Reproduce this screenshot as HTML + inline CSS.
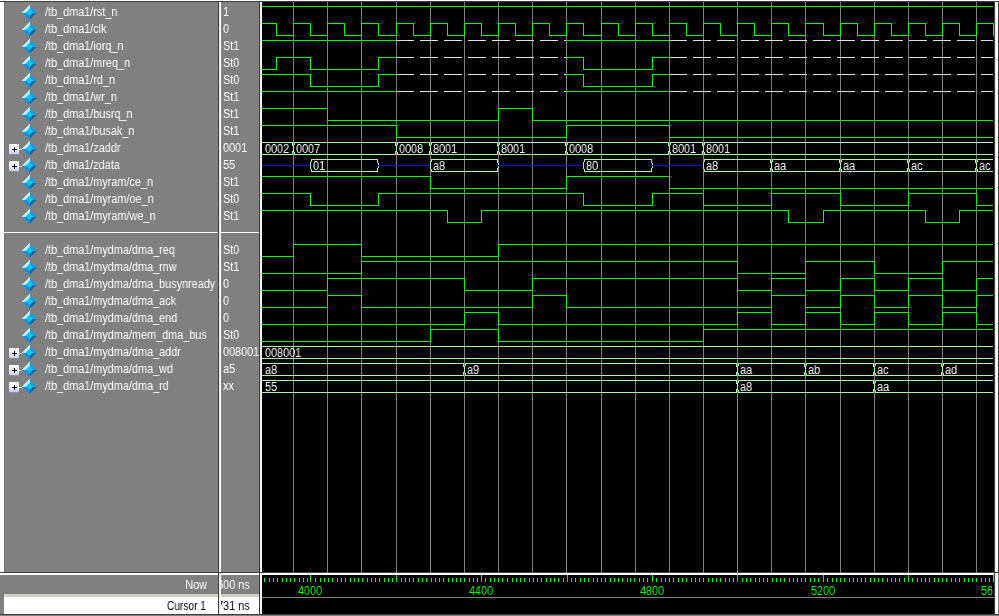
<!DOCTYPE html>
<html><head><meta charset="utf-8"><style>
html,body{margin:0;padding:0;width:999px;height:616px;overflow:hidden;background:#808080;}
body{position:relative;font-family:"Liberation Sans",sans-serif;font-size:12px;}
.t{transform:scaleX(0.905);transform-origin:0 0;will-change:transform;}
.tr{transform:scaleX(0.905);transform-origin:100% 0;will-change:transform;}
.a{position:absolute;}
.nm{position:absolute;left:45px;transform:scaleX(0.905);transform-origin:0 0;will-change:transform;color:#fff;white-space:nowrap;line-height:17px;height:17px;}
.vl{position:absolute;left:223px;transform:scaleX(0.905);transform-origin:0 0;will-change:transform;color:#fff;white-space:nowrap;line-height:17px;height:17px;}
.dia{position:absolute;left:22px;width:15px;height:15px;}
.plus{position:absolute;left:9px;width:10px;height:10px;}
</style></head><body>

<div class="a" style="left:0px;top:0px;width:999px;height:1px;background:#ffffff;"></div>
<div class="a" style="left:0px;top:1px;width:999px;height:1px;background:#404040;"></div>
<div class="a" style="left:0px;top:2px;width:4px;height:570px;background:#ffffff;"></div>
<div class="a" style="left:4px;top:2px;width:1px;height:570px;background:#747474;"></div>
<div class="a" style="left:4px;top:232px;width:214px;height:1px;background:#ffffff;"></div>
<div class="a" style="left:221px;top:232px;width:38px;height:1px;background:#ffffff;"></div>
<div class="a" style="left:218px;top:2px;width:1px;height:614px;background:#404040;"></div>
<div class="a" style="left:219px;top:2px;width:1px;height:614px;background:#ece9e0;"></div>
<div class="a" style="left:220px;top:2px;width:1px;height:614px;background:#ffffff;"></div>
<div class="a" style="left:259px;top:2px;width:1px;height:614px;background:#404040;"></div>
<div class="a" style="left:260px;top:2px;width:1px;height:614px;background:#ece9e0;"></div>
<div class="a" style="left:261px;top:2px;width:1px;height:614px;background:#ffffff;"></div>
<div class="a" style="left:262px;top:2px;width:732px;height:570px;background:#000000;"></div>
<div class="a" style="left:994px;top:2px;width:1px;height:614px;background:#404040;"></div>
<div class="a" style="left:995px;top:2px;width:1px;height:614px;background:#ece9e0;"></div>
<div class="a" style="left:996px;top:2px;width:2px;height:614px;background:#ffffff;"></div>
<div class="a" style="left:998px;top:2px;width:1px;height:570px;background:#404040;"></div>
<div class="a" style="left:998px;top:575px;width:1px;height:41px;background:#808080;"></div>
<div class="a" style="left:0px;top:572px;width:999px;height:1px;background:#404040;"></div>
<div class="a" style="left:0px;top:573px;width:218px;height:2px;background:#ffffff;"></div>
<div class="a" style="left:221px;top:573px;width:38px;height:2px;background:#ffffff;"></div>
<div class="a" style="left:262px;top:573px;width:732px;height:2px;background:#ffffff;"></div>
<div class="a" style="left:262px;top:575px;width:732px;height:22px;background:#000000;"></div>
<div class="a" style="left:262px;top:597px;width:732px;height:1px;background:#808080;"></div>
<div class="a" style="left:262px;top:598px;width:732px;height:16px;background:#000000;"></div>
<div class="a" style="left:4px;top:594px;width:214px;height:3px;background:#d4d0c8;"></div>
<div class="a" style="left:4px;top:597px;width:214px;height:17px;background:#ffffff;"></div>
<div class="a" style="left:221px;top:594px;width:38px;height:3px;background:#d4d0c8;"></div>
<div class="a" style="left:221px;top:597px;width:38px;height:17px;background:#ffffff;"></div>
<div class="a" style="left:0px;top:614px;width:999px;height:1px;background:#404040;"></div>
<div class="a" style="left:0px;top:615px;width:999px;height:1px;background:#808080;"></div>
<svg class="a" style="left:0;top:0" width="999" height="616" shape-rendering="crispEdges">
<rect x="293" y="2" width="1" height="571" fill="#808080"/>
<rect x="327" y="2" width="1" height="571" fill="#808080"/>
<rect x="361" y="2" width="1" height="571" fill="#808080"/>
<rect x="396" y="2" width="1" height="571" fill="#808080"/>
<rect x="430" y="2" width="1" height="571" fill="#808080"/>
<rect x="464" y="2" width="1" height="571" fill="#808080"/>
<rect x="498" y="2" width="1" height="571" fill="#808080"/>
<rect x="532" y="2" width="1" height="571" fill="#808080"/>
<rect x="566" y="2" width="1" height="571" fill="#808080"/>
<rect x="601" y="2" width="1" height="571" fill="#808080"/>
<rect x="635" y="2" width="1" height="571" fill="#808080"/>
<rect x="669" y="2" width="1" height="571" fill="#808080"/>
<rect x="703" y="2" width="1" height="571" fill="#808080"/>
<rect x="737" y="2" width="1" height="571" fill="#808080"/>
<rect x="771" y="2" width="1" height="571" fill="#808080"/>
<rect x="805" y="2" width="1" height="571" fill="#808080"/>
<rect x="840" y="2" width="1" height="571" fill="#808080"/>
<rect x="874" y="2" width="1" height="571" fill="#808080"/>
<rect x="908" y="2" width="1" height="571" fill="#808080"/>
<rect x="942" y="2" width="1" height="571" fill="#808080"/>
<rect x="976" y="2" width="1" height="571" fill="#808080"/>
<rect x="262" y="6" width="731" height="1" fill="#00ff00"/>
<rect x="276" y="23" width="1" height="13" fill="#00ff00"/>
<rect x="293" y="23" width="1" height="13" fill="#00ff00"/>
<rect x="310" y="23" width="1" height="13" fill="#00ff00"/>
<rect x="327" y="23" width="1" height="13" fill="#00ff00"/>
<rect x="344" y="23" width="1" height="13" fill="#00ff00"/>
<rect x="361" y="23" width="1" height="13" fill="#00ff00"/>
<rect x="378" y="23" width="1" height="13" fill="#00ff00"/>
<rect x="396" y="23" width="1" height="13" fill="#00ff00"/>
<rect x="413" y="23" width="1" height="13" fill="#00ff00"/>
<rect x="430" y="23" width="1" height="13" fill="#00ff00"/>
<rect x="447" y="23" width="1" height="13" fill="#00ff00"/>
<rect x="464" y="23" width="1" height="13" fill="#00ff00"/>
<rect x="481" y="23" width="1" height="13" fill="#00ff00"/>
<rect x="498" y="23" width="1" height="13" fill="#00ff00"/>
<rect x="515" y="23" width="1" height="13" fill="#00ff00"/>
<rect x="532" y="23" width="1" height="13" fill="#00ff00"/>
<rect x="549" y="23" width="1" height="13" fill="#00ff00"/>
<rect x="566" y="23" width="1" height="13" fill="#00ff00"/>
<rect x="583" y="23" width="1" height="13" fill="#00ff00"/>
<rect x="601" y="23" width="1" height="13" fill="#00ff00"/>
<rect x="618" y="23" width="1" height="13" fill="#00ff00"/>
<rect x="635" y="23" width="1" height="13" fill="#00ff00"/>
<rect x="652" y="23" width="1" height="13" fill="#00ff00"/>
<rect x="669" y="23" width="1" height="13" fill="#00ff00"/>
<rect x="686" y="23" width="1" height="13" fill="#00ff00"/>
<rect x="703" y="23" width="1" height="13" fill="#00ff00"/>
<rect x="720" y="23" width="1" height="13" fill="#00ff00"/>
<rect x="737" y="23" width="1" height="13" fill="#00ff00"/>
<rect x="754" y="23" width="1" height="13" fill="#00ff00"/>
<rect x="771" y="23" width="1" height="13" fill="#00ff00"/>
<rect x="788" y="23" width="1" height="13" fill="#00ff00"/>
<rect x="805" y="23" width="1" height="13" fill="#00ff00"/>
<rect x="823" y="23" width="1" height="13" fill="#00ff00"/>
<rect x="840" y="23" width="1" height="13" fill="#00ff00"/>
<rect x="857" y="23" width="1" height="13" fill="#00ff00"/>
<rect x="874" y="23" width="1" height="13" fill="#00ff00"/>
<rect x="891" y="23" width="1" height="13" fill="#00ff00"/>
<rect x="908" y="23" width="1" height="13" fill="#00ff00"/>
<rect x="925" y="23" width="1" height="13" fill="#00ff00"/>
<rect x="942" y="23" width="1" height="13" fill="#00ff00"/>
<rect x="959" y="23" width="1" height="13" fill="#00ff00"/>
<rect x="976" y="23" width="1" height="13" fill="#00ff00"/>
<rect x="993" y="23" width="1" height="13" fill="#00ff00"/>
<rect x="262" y="23" width="15" height="1" fill="#00ff00"/>
<rect x="276" y="35" width="18" height="1" fill="#00ff00"/>
<rect x="293" y="23" width="18" height="1" fill="#00ff00"/>
<rect x="310" y="35" width="18" height="1" fill="#00ff00"/>
<rect x="327" y="23" width="18" height="1" fill="#00ff00"/>
<rect x="344" y="35" width="18" height="1" fill="#00ff00"/>
<rect x="361" y="23" width="18" height="1" fill="#00ff00"/>
<rect x="378" y="35" width="19" height="1" fill="#00ff00"/>
<rect x="396" y="23" width="18" height="1" fill="#00ff00"/>
<rect x="413" y="35" width="18" height="1" fill="#00ff00"/>
<rect x="430" y="23" width="18" height="1" fill="#00ff00"/>
<rect x="447" y="35" width="18" height="1" fill="#00ff00"/>
<rect x="464" y="23" width="18" height="1" fill="#00ff00"/>
<rect x="481" y="35" width="18" height="1" fill="#00ff00"/>
<rect x="498" y="23" width="18" height="1" fill="#00ff00"/>
<rect x="515" y="35" width="18" height="1" fill="#00ff00"/>
<rect x="532" y="23" width="18" height="1" fill="#00ff00"/>
<rect x="549" y="35" width="18" height="1" fill="#00ff00"/>
<rect x="566" y="23" width="18" height="1" fill="#00ff00"/>
<rect x="583" y="35" width="19" height="1" fill="#00ff00"/>
<rect x="601" y="23" width="18" height="1" fill="#00ff00"/>
<rect x="618" y="35" width="18" height="1" fill="#00ff00"/>
<rect x="635" y="23" width="18" height="1" fill="#00ff00"/>
<rect x="652" y="35" width="18" height="1" fill="#00ff00"/>
<rect x="669" y="23" width="18" height="1" fill="#00ff00"/>
<rect x="686" y="35" width="18" height="1" fill="#00ff00"/>
<rect x="703" y="23" width="18" height="1" fill="#00ff00"/>
<rect x="720" y="35" width="18" height="1" fill="#00ff00"/>
<rect x="737" y="23" width="18" height="1" fill="#00ff00"/>
<rect x="754" y="35" width="18" height="1" fill="#00ff00"/>
<rect x="771" y="23" width="18" height="1" fill="#00ff00"/>
<rect x="788" y="35" width="18" height="1" fill="#00ff00"/>
<rect x="805" y="23" width="19" height="1" fill="#00ff00"/>
<rect x="823" y="35" width="18" height="1" fill="#00ff00"/>
<rect x="840" y="23" width="18" height="1" fill="#00ff00"/>
<rect x="857" y="35" width="18" height="1" fill="#00ff00"/>
<rect x="874" y="23" width="18" height="1" fill="#00ff00"/>
<rect x="891" y="35" width="18" height="1" fill="#00ff00"/>
<rect x="908" y="23" width="18" height="1" fill="#00ff00"/>
<rect x="925" y="35" width="18" height="1" fill="#00ff00"/>
<rect x="942" y="23" width="18" height="1" fill="#00ff00"/>
<rect x="959" y="35" width="18" height="1" fill="#00ff00"/>
<rect x="976" y="23" width="17" height="1" fill="#00ff00"/>
<rect x="262" y="40" width="135" height="1" fill="#00ff00"/>
<rect x="396" y="40" width="18" height="1" fill="#e0e0e0"/>
<rect x="420" y="40" width="18" height="1" fill="#e0e0e0"/>
<rect x="444" y="40" width="18" height="1" fill="#e0e0e0"/>
<rect x="468" y="40" width="18" height="1" fill="#e0e0e0"/>
<rect x="492" y="40" width="18" height="1" fill="#e0e0e0"/>
<rect x="516" y="40" width="18" height="1" fill="#e0e0e0"/>
<rect x="540" y="40" width="18" height="1" fill="#e0e0e0"/>
<rect x="564" y="40" width="2" height="1" fill="#e0e0e0"/>
<rect x="566" y="40" width="104" height="1" fill="#00ff00"/>
<rect x="669" y="40" width="18" height="1" fill="#e0e0e0"/>
<rect x="693" y="40" width="18" height="1" fill="#e0e0e0"/>
<rect x="717" y="40" width="18" height="1" fill="#e0e0e0"/>
<rect x="741" y="40" width="18" height="1" fill="#e0e0e0"/>
<rect x="765" y="40" width="18" height="1" fill="#e0e0e0"/>
<rect x="789" y="40" width="18" height="1" fill="#e0e0e0"/>
<rect x="813" y="40" width="18" height="1" fill="#e0e0e0"/>
<rect x="837" y="40" width="18" height="1" fill="#e0e0e0"/>
<rect x="861" y="40" width="18" height="1" fill="#e0e0e0"/>
<rect x="885" y="40" width="18" height="1" fill="#e0e0e0"/>
<rect x="909" y="40" width="18" height="1" fill="#e0e0e0"/>
<rect x="933" y="40" width="18" height="1" fill="#e0e0e0"/>
<rect x="957" y="40" width="18" height="1" fill="#e0e0e0"/>
<rect x="981" y="40" width="12" height="1" fill="#e0e0e0"/>
<rect x="276" y="57" width="1" height="13" fill="#00ff00"/>
<rect x="310" y="57" width="1" height="13" fill="#00ff00"/>
<rect x="378" y="57" width="1" height="13" fill="#00ff00"/>
<rect x="583" y="57" width="1" height="13" fill="#00ff00"/>
<rect x="652" y="57" width="1" height="13" fill="#00ff00"/>
<rect x="262" y="69" width="15" height="1" fill="#00ff00"/>
<rect x="276" y="57" width="35" height="1" fill="#00ff00"/>
<rect x="310" y="69" width="69" height="1" fill="#00ff00"/>
<rect x="378" y="57" width="19" height="1" fill="#00ff00"/>
<rect x="396" y="57" width="18" height="1" fill="#e0e0e0"/>
<rect x="420" y="57" width="18" height="1" fill="#e0e0e0"/>
<rect x="444" y="57" width="18" height="1" fill="#e0e0e0"/>
<rect x="468" y="57" width="18" height="1" fill="#e0e0e0"/>
<rect x="492" y="57" width="18" height="1" fill="#e0e0e0"/>
<rect x="516" y="57" width="18" height="1" fill="#e0e0e0"/>
<rect x="540" y="57" width="18" height="1" fill="#e0e0e0"/>
<rect x="564" y="57" width="2" height="1" fill="#e0e0e0"/>
<rect x="566" y="57" width="18" height="1" fill="#00ff00"/>
<rect x="583" y="69" width="70" height="1" fill="#00ff00"/>
<rect x="652" y="57" width="18" height="1" fill="#00ff00"/>
<rect x="669" y="57" width="18" height="1" fill="#e0e0e0"/>
<rect x="693" y="57" width="18" height="1" fill="#e0e0e0"/>
<rect x="717" y="57" width="18" height="1" fill="#e0e0e0"/>
<rect x="741" y="57" width="18" height="1" fill="#e0e0e0"/>
<rect x="765" y="57" width="18" height="1" fill="#e0e0e0"/>
<rect x="789" y="57" width="18" height="1" fill="#e0e0e0"/>
<rect x="813" y="57" width="18" height="1" fill="#e0e0e0"/>
<rect x="837" y="57" width="18" height="1" fill="#e0e0e0"/>
<rect x="861" y="57" width="18" height="1" fill="#e0e0e0"/>
<rect x="885" y="57" width="18" height="1" fill="#e0e0e0"/>
<rect x="909" y="57" width="18" height="1" fill="#e0e0e0"/>
<rect x="933" y="57" width="18" height="1" fill="#e0e0e0"/>
<rect x="957" y="57" width="18" height="1" fill="#e0e0e0"/>
<rect x="981" y="57" width="12" height="1" fill="#e0e0e0"/>
<rect x="310" y="74" width="1" height="13" fill="#00ff00"/>
<rect x="378" y="74" width="1" height="13" fill="#00ff00"/>
<rect x="583" y="74" width="1" height="13" fill="#00ff00"/>
<rect x="652" y="74" width="1" height="13" fill="#00ff00"/>
<rect x="262" y="74" width="49" height="1" fill="#00ff00"/>
<rect x="310" y="86" width="69" height="1" fill="#00ff00"/>
<rect x="378" y="74" width="19" height="1" fill="#00ff00"/>
<rect x="396" y="74" width="18" height="1" fill="#e0e0e0"/>
<rect x="420" y="74" width="18" height="1" fill="#e0e0e0"/>
<rect x="444" y="74" width="18" height="1" fill="#e0e0e0"/>
<rect x="468" y="74" width="18" height="1" fill="#e0e0e0"/>
<rect x="492" y="74" width="18" height="1" fill="#e0e0e0"/>
<rect x="516" y="74" width="18" height="1" fill="#e0e0e0"/>
<rect x="540" y="74" width="18" height="1" fill="#e0e0e0"/>
<rect x="564" y="74" width="2" height="1" fill="#e0e0e0"/>
<rect x="566" y="74" width="18" height="1" fill="#00ff00"/>
<rect x="583" y="86" width="70" height="1" fill="#00ff00"/>
<rect x="652" y="74" width="18" height="1" fill="#00ff00"/>
<rect x="669" y="74" width="18" height="1" fill="#e0e0e0"/>
<rect x="693" y="74" width="18" height="1" fill="#e0e0e0"/>
<rect x="717" y="74" width="18" height="1" fill="#e0e0e0"/>
<rect x="741" y="74" width="18" height="1" fill="#e0e0e0"/>
<rect x="765" y="74" width="18" height="1" fill="#e0e0e0"/>
<rect x="789" y="74" width="18" height="1" fill="#e0e0e0"/>
<rect x="813" y="74" width="18" height="1" fill="#e0e0e0"/>
<rect x="837" y="74" width="18" height="1" fill="#e0e0e0"/>
<rect x="861" y="74" width="18" height="1" fill="#e0e0e0"/>
<rect x="885" y="74" width="18" height="1" fill="#e0e0e0"/>
<rect x="909" y="74" width="18" height="1" fill="#e0e0e0"/>
<rect x="933" y="74" width="18" height="1" fill="#e0e0e0"/>
<rect x="957" y="74" width="18" height="1" fill="#e0e0e0"/>
<rect x="981" y="74" width="12" height="1" fill="#e0e0e0"/>
<rect x="262" y="91" width="135" height="1" fill="#00ff00"/>
<rect x="396" y="91" width="18" height="1" fill="#e0e0e0"/>
<rect x="420" y="91" width="18" height="1" fill="#e0e0e0"/>
<rect x="444" y="91" width="18" height="1" fill="#e0e0e0"/>
<rect x="468" y="91" width="18" height="1" fill="#e0e0e0"/>
<rect x="492" y="91" width="18" height="1" fill="#e0e0e0"/>
<rect x="516" y="91" width="18" height="1" fill="#e0e0e0"/>
<rect x="540" y="91" width="18" height="1" fill="#e0e0e0"/>
<rect x="564" y="91" width="2" height="1" fill="#e0e0e0"/>
<rect x="566" y="91" width="104" height="1" fill="#00ff00"/>
<rect x="669" y="91" width="18" height="1" fill="#e0e0e0"/>
<rect x="693" y="91" width="18" height="1" fill="#e0e0e0"/>
<rect x="717" y="91" width="18" height="1" fill="#e0e0e0"/>
<rect x="741" y="91" width="18" height="1" fill="#e0e0e0"/>
<rect x="765" y="91" width="18" height="1" fill="#e0e0e0"/>
<rect x="789" y="91" width="18" height="1" fill="#e0e0e0"/>
<rect x="813" y="91" width="18" height="1" fill="#e0e0e0"/>
<rect x="837" y="91" width="18" height="1" fill="#e0e0e0"/>
<rect x="861" y="91" width="18" height="1" fill="#e0e0e0"/>
<rect x="885" y="91" width="18" height="1" fill="#e0e0e0"/>
<rect x="909" y="91" width="18" height="1" fill="#e0e0e0"/>
<rect x="933" y="91" width="18" height="1" fill="#e0e0e0"/>
<rect x="957" y="91" width="18" height="1" fill="#e0e0e0"/>
<rect x="981" y="91" width="12" height="1" fill="#e0e0e0"/>
<rect x="327" y="108" width="1" height="13" fill="#00ff00"/>
<rect x="498" y="108" width="1" height="13" fill="#00ff00"/>
<rect x="532" y="108" width="1" height="13" fill="#00ff00"/>
<rect x="262" y="108" width="66" height="1" fill="#00ff00"/>
<rect x="327" y="120" width="172" height="1" fill="#00ff00"/>
<rect x="498" y="108" width="35" height="1" fill="#00ff00"/>
<rect x="532" y="120" width="461" height="1" fill="#00ff00"/>
<rect x="396" y="125" width="1" height="13" fill="#00ff00"/>
<rect x="566" y="125" width="1" height="13" fill="#00ff00"/>
<rect x="669" y="125" width="1" height="13" fill="#00ff00"/>
<rect x="262" y="125" width="135" height="1" fill="#00ff00"/>
<rect x="396" y="137" width="171" height="1" fill="#00ff00"/>
<rect x="566" y="125" width="104" height="1" fill="#00ff00"/>
<rect x="669" y="137" width="324" height="1" fill="#00ff00"/>
<rect x="430" y="176" width="1" height="13" fill="#00ff00"/>
<rect x="566" y="176" width="1" height="13" fill="#00ff00"/>
<rect x="669" y="176" width="1" height="13" fill="#00ff00"/>
<rect x="262" y="176" width="169" height="1" fill="#00ff00"/>
<rect x="430" y="188" width="137" height="1" fill="#00ff00"/>
<rect x="566" y="176" width="104" height="1" fill="#00ff00"/>
<rect x="669" y="188" width="324" height="1" fill="#00ff00"/>
<rect x="310" y="193" width="1" height="13" fill="#00ff00"/>
<rect x="378" y="193" width="1" height="13" fill="#00ff00"/>
<rect x="583" y="193" width="1" height="13" fill="#00ff00"/>
<rect x="652" y="193" width="1" height="13" fill="#00ff00"/>
<rect x="703" y="193" width="1" height="13" fill="#00ff00"/>
<rect x="771" y="193" width="1" height="13" fill="#00ff00"/>
<rect x="840" y="193" width="1" height="13" fill="#00ff00"/>
<rect x="908" y="193" width="1" height="13" fill="#00ff00"/>
<rect x="976" y="193" width="1" height="13" fill="#00ff00"/>
<rect x="262" y="193" width="49" height="1" fill="#00ff00"/>
<rect x="310" y="205" width="69" height="1" fill="#00ff00"/>
<rect x="378" y="193" width="206" height="1" fill="#00ff00"/>
<rect x="583" y="205" width="70" height="1" fill="#00ff00"/>
<rect x="652" y="193" width="52" height="1" fill="#00ff00"/>
<rect x="703" y="205" width="69" height="1" fill="#00ff00"/>
<rect x="771" y="193" width="70" height="1" fill="#00ff00"/>
<rect x="840" y="205" width="69" height="1" fill="#00ff00"/>
<rect x="908" y="193" width="69" height="1" fill="#00ff00"/>
<rect x="976" y="205" width="17" height="1" fill="#00ff00"/>
<rect x="447" y="210" width="1" height="13" fill="#00ff00"/>
<rect x="481" y="210" width="1" height="13" fill="#00ff00"/>
<rect x="788" y="210" width="1" height="13" fill="#00ff00"/>
<rect x="823" y="210" width="1" height="13" fill="#00ff00"/>
<rect x="925" y="210" width="1" height="13" fill="#00ff00"/>
<rect x="959" y="210" width="1" height="13" fill="#00ff00"/>
<rect x="262" y="210" width="186" height="1" fill="#00ff00"/>
<rect x="447" y="222" width="35" height="1" fill="#00ff00"/>
<rect x="481" y="210" width="308" height="1" fill="#00ff00"/>
<rect x="788" y="222" width="36" height="1" fill="#00ff00"/>
<rect x="823" y="210" width="103" height="1" fill="#00ff00"/>
<rect x="925" y="222" width="35" height="1" fill="#00ff00"/>
<rect x="959" y="210" width="34" height="1" fill="#00ff00"/>
<rect x="293" y="244" width="1" height="13" fill="#00ff00"/>
<rect x="361" y="244" width="1" height="13" fill="#00ff00"/>
<rect x="498" y="244" width="1" height="13" fill="#00ff00"/>
<rect x="262" y="256" width="32" height="1" fill="#00ff00"/>
<rect x="293" y="244" width="69" height="1" fill="#00ff00"/>
<rect x="361" y="256" width="138" height="1" fill="#00ff00"/>
<rect x="498" y="244" width="495" height="1" fill="#00ff00"/>
<rect x="361" y="261" width="1" height="13" fill="#00ff00"/>
<rect x="737" y="261" width="1" height="13" fill="#00ff00"/>
<rect x="805" y="261" width="1" height="13" fill="#00ff00"/>
<rect x="874" y="261" width="1" height="13" fill="#00ff00"/>
<rect x="942" y="261" width="1" height="13" fill="#00ff00"/>
<rect x="262" y="273" width="100" height="1" fill="#00ff00"/>
<rect x="361" y="261" width="377" height="1" fill="#00ff00"/>
<rect x="737" y="273" width="69" height="1" fill="#00ff00"/>
<rect x="805" y="261" width="70" height="1" fill="#00ff00"/>
<rect x="874" y="273" width="69" height="1" fill="#00ff00"/>
<rect x="942" y="261" width="51" height="1" fill="#00ff00"/>
<rect x="327" y="278" width="1" height="13" fill="#00ff00"/>
<rect x="464" y="278" width="1" height="13" fill="#00ff00"/>
<rect x="532" y="278" width="1" height="13" fill="#00ff00"/>
<rect x="737" y="278" width="1" height="13" fill="#00ff00"/>
<rect x="771" y="278" width="1" height="13" fill="#00ff00"/>
<rect x="805" y="278" width="1" height="13" fill="#00ff00"/>
<rect x="840" y="278" width="1" height="13" fill="#00ff00"/>
<rect x="874" y="278" width="1" height="13" fill="#00ff00"/>
<rect x="908" y="278" width="1" height="13" fill="#00ff00"/>
<rect x="942" y="278" width="1" height="13" fill="#00ff00"/>
<rect x="976" y="278" width="1" height="13" fill="#00ff00"/>
<rect x="262" y="290" width="66" height="1" fill="#00ff00"/>
<rect x="327" y="278" width="138" height="1" fill="#00ff00"/>
<rect x="464" y="290" width="69" height="1" fill="#00ff00"/>
<rect x="532" y="278" width="206" height="1" fill="#00ff00"/>
<rect x="737" y="290" width="35" height="1" fill="#00ff00"/>
<rect x="771" y="278" width="35" height="1" fill="#00ff00"/>
<rect x="805" y="290" width="36" height="1" fill="#00ff00"/>
<rect x="840" y="278" width="35" height="1" fill="#00ff00"/>
<rect x="874" y="290" width="35" height="1" fill="#00ff00"/>
<rect x="908" y="278" width="35" height="1" fill="#00ff00"/>
<rect x="942" y="290" width="35" height="1" fill="#00ff00"/>
<rect x="976" y="278" width="17" height="1" fill="#00ff00"/>
<rect x="327" y="295" width="1" height="13" fill="#00ff00"/>
<rect x="361" y="295" width="1" height="13" fill="#00ff00"/>
<rect x="532" y="295" width="1" height="13" fill="#00ff00"/>
<rect x="566" y="295" width="1" height="13" fill="#00ff00"/>
<rect x="771" y="295" width="1" height="13" fill="#00ff00"/>
<rect x="805" y="295" width="1" height="13" fill="#00ff00"/>
<rect x="840" y="295" width="1" height="13" fill="#00ff00"/>
<rect x="874" y="295" width="1" height="13" fill="#00ff00"/>
<rect x="908" y="295" width="1" height="13" fill="#00ff00"/>
<rect x="942" y="295" width="1" height="13" fill="#00ff00"/>
<rect x="976" y="295" width="1" height="13" fill="#00ff00"/>
<rect x="262" y="307" width="66" height="1" fill="#00ff00"/>
<rect x="327" y="295" width="35" height="1" fill="#00ff00"/>
<rect x="361" y="307" width="172" height="1" fill="#00ff00"/>
<rect x="532" y="295" width="35" height="1" fill="#00ff00"/>
<rect x="566" y="307" width="206" height="1" fill="#00ff00"/>
<rect x="771" y="295" width="35" height="1" fill="#00ff00"/>
<rect x="805" y="307" width="36" height="1" fill="#00ff00"/>
<rect x="840" y="295" width="35" height="1" fill="#00ff00"/>
<rect x="874" y="307" width="35" height="1" fill="#00ff00"/>
<rect x="908" y="295" width="35" height="1" fill="#00ff00"/>
<rect x="942" y="307" width="35" height="1" fill="#00ff00"/>
<rect x="976" y="295" width="17" height="1" fill="#00ff00"/>
<rect x="464" y="312" width="1" height="13" fill="#00ff00"/>
<rect x="498" y="312" width="1" height="13" fill="#00ff00"/>
<rect x="737" y="312" width="1" height="13" fill="#00ff00"/>
<rect x="771" y="312" width="1" height="13" fill="#00ff00"/>
<rect x="805" y="312" width="1" height="13" fill="#00ff00"/>
<rect x="840" y="312" width="1" height="13" fill="#00ff00"/>
<rect x="874" y="312" width="1" height="13" fill="#00ff00"/>
<rect x="908" y="312" width="1" height="13" fill="#00ff00"/>
<rect x="942" y="312" width="1" height="13" fill="#00ff00"/>
<rect x="976" y="312" width="1" height="13" fill="#00ff00"/>
<rect x="262" y="324" width="203" height="1" fill="#00ff00"/>
<rect x="464" y="312" width="35" height="1" fill="#00ff00"/>
<rect x="498" y="324" width="240" height="1" fill="#00ff00"/>
<rect x="737" y="312" width="35" height="1" fill="#00ff00"/>
<rect x="771" y="324" width="35" height="1" fill="#00ff00"/>
<rect x="805" y="312" width="36" height="1" fill="#00ff00"/>
<rect x="840" y="324" width="35" height="1" fill="#00ff00"/>
<rect x="874" y="312" width="35" height="1" fill="#00ff00"/>
<rect x="908" y="324" width="35" height="1" fill="#00ff00"/>
<rect x="942" y="312" width="35" height="1" fill="#00ff00"/>
<rect x="976" y="324" width="17" height="1" fill="#00ff00"/>
<rect x="430" y="329" width="1" height="13" fill="#00ff00"/>
<rect x="498" y="329" width="1" height="13" fill="#00ff00"/>
<rect x="703" y="329" width="1" height="13" fill="#00ff00"/>
<rect x="262" y="341" width="169" height="1" fill="#00ff00"/>
<rect x="430" y="329" width="69" height="1" fill="#00ff00"/>
<rect x="498" y="341" width="206" height="1" fill="#00ff00"/>
<rect x="703" y="329" width="290" height="1" fill="#00ff00"/>
<rect x="262" y="142" width="31" height="1" fill="#a8f8a8"/>
<rect x="262" y="154" width="31" height="1" fill="#a8f8a8"/>
<rect x="292" y="142" width="1" height="4" fill="#a8f8a8"/>
<rect x="293" y="146" width="1" height="5" fill="#a8f8a8"/>
<rect x="292" y="151" width="1" height="4" fill="#a8f8a8"/>
<rect x="294" y="142" width="102" height="1" fill="#a8f8a8"/>
<rect x="294" y="154" width="102" height="1" fill="#a8f8a8"/>
<rect x="294" y="142" width="1" height="3" fill="#a8f8a8"/>
<rect x="293" y="145" width="1" height="7" fill="#a8f8a8"/>
<rect x="294" y="152" width="1" height="3" fill="#a8f8a8"/>
<rect x="395" y="142" width="1" height="4" fill="#a8f8a8"/>
<rect x="396" y="146" width="1" height="5" fill="#a8f8a8"/>
<rect x="395" y="151" width="1" height="4" fill="#a8f8a8"/>
<rect x="397" y="142" width="33" height="1" fill="#a8f8a8"/>
<rect x="397" y="154" width="33" height="1" fill="#a8f8a8"/>
<rect x="397" y="142" width="1" height="3" fill="#a8f8a8"/>
<rect x="396" y="145" width="1" height="7" fill="#a8f8a8"/>
<rect x="397" y="152" width="1" height="3" fill="#a8f8a8"/>
<rect x="429" y="142" width="1" height="4" fill="#a8f8a8"/>
<rect x="430" y="146" width="1" height="5" fill="#a8f8a8"/>
<rect x="429" y="151" width="1" height="4" fill="#a8f8a8"/>
<rect x="431" y="142" width="67" height="1" fill="#a8f8a8"/>
<rect x="431" y="154" width="67" height="1" fill="#a8f8a8"/>
<rect x="431" y="142" width="1" height="3" fill="#a8f8a8"/>
<rect x="430" y="145" width="1" height="7" fill="#a8f8a8"/>
<rect x="431" y="152" width="1" height="3" fill="#a8f8a8"/>
<rect x="497" y="142" width="1" height="4" fill="#a8f8a8"/>
<rect x="498" y="146" width="1" height="5" fill="#a8f8a8"/>
<rect x="497" y="151" width="1" height="4" fill="#a8f8a8"/>
<rect x="499" y="142" width="67" height="1" fill="#a8f8a8"/>
<rect x="499" y="154" width="67" height="1" fill="#a8f8a8"/>
<rect x="499" y="142" width="1" height="3" fill="#a8f8a8"/>
<rect x="498" y="145" width="1" height="7" fill="#a8f8a8"/>
<rect x="499" y="152" width="1" height="3" fill="#a8f8a8"/>
<rect x="565" y="142" width="1" height="4" fill="#a8f8a8"/>
<rect x="566" y="146" width="1" height="5" fill="#a8f8a8"/>
<rect x="565" y="151" width="1" height="4" fill="#a8f8a8"/>
<rect x="567" y="142" width="102" height="1" fill="#a8f8a8"/>
<rect x="567" y="154" width="102" height="1" fill="#a8f8a8"/>
<rect x="567" y="142" width="1" height="3" fill="#a8f8a8"/>
<rect x="566" y="145" width="1" height="7" fill="#a8f8a8"/>
<rect x="567" y="152" width="1" height="3" fill="#a8f8a8"/>
<rect x="668" y="142" width="1" height="4" fill="#a8f8a8"/>
<rect x="669" y="146" width="1" height="5" fill="#a8f8a8"/>
<rect x="668" y="151" width="1" height="4" fill="#a8f8a8"/>
<rect x="670" y="142" width="33" height="1" fill="#a8f8a8"/>
<rect x="670" y="154" width="33" height="1" fill="#a8f8a8"/>
<rect x="670" y="142" width="1" height="3" fill="#a8f8a8"/>
<rect x="669" y="145" width="1" height="7" fill="#a8f8a8"/>
<rect x="670" y="152" width="1" height="3" fill="#a8f8a8"/>
<rect x="702" y="142" width="1" height="4" fill="#a8f8a8"/>
<rect x="703" y="146" width="1" height="5" fill="#a8f8a8"/>
<rect x="702" y="151" width="1" height="4" fill="#a8f8a8"/>
<rect x="704" y="142" width="289" height="1" fill="#a8f8a8"/>
<rect x="704" y="154" width="289" height="1" fill="#a8f8a8"/>
<rect x="704" y="142" width="1" height="3" fill="#a8f8a8"/>
<rect x="703" y="145" width="1" height="7" fill="#a8f8a8"/>
<rect x="704" y="152" width="1" height="3" fill="#a8f8a8"/>
<rect x="262" y="165" width="49" height="1" fill="#0000ff"/>
<rect x="311" y="159" width="67" height="1" fill="#a8f8a8"/>
<rect x="311" y="171" width="67" height="1" fill="#a8f8a8"/>
<rect x="311" y="159" width="1" height="3" fill="#a8f8a8"/>
<rect x="310" y="162" width="1" height="7" fill="#a8f8a8"/>
<rect x="311" y="169" width="1" height="3" fill="#a8f8a8"/>
<rect x="377" y="159" width="1" height="4" fill="#a8f8a8"/>
<rect x="378" y="163" width="1" height="5" fill="#a8f8a8"/>
<rect x="377" y="168" width="1" height="4" fill="#a8f8a8"/>
<rect x="378" y="165" width="53" height="1" fill="#0000ff"/>
<rect x="431" y="159" width="67" height="1" fill="#a8f8a8"/>
<rect x="431" y="171" width="67" height="1" fill="#a8f8a8"/>
<rect x="431" y="159" width="1" height="3" fill="#a8f8a8"/>
<rect x="430" y="162" width="1" height="7" fill="#a8f8a8"/>
<rect x="431" y="169" width="1" height="3" fill="#a8f8a8"/>
<rect x="497" y="159" width="1" height="4" fill="#a8f8a8"/>
<rect x="498" y="163" width="1" height="5" fill="#a8f8a8"/>
<rect x="497" y="168" width="1" height="4" fill="#a8f8a8"/>
<rect x="498" y="165" width="86" height="1" fill="#0000ff"/>
<rect x="584" y="159" width="68" height="1" fill="#a8f8a8"/>
<rect x="584" y="171" width="68" height="1" fill="#a8f8a8"/>
<rect x="584" y="159" width="1" height="3" fill="#a8f8a8"/>
<rect x="583" y="162" width="1" height="7" fill="#a8f8a8"/>
<rect x="584" y="169" width="1" height="3" fill="#a8f8a8"/>
<rect x="651" y="159" width="1" height="4" fill="#a8f8a8"/>
<rect x="652" y="163" width="1" height="5" fill="#a8f8a8"/>
<rect x="651" y="168" width="1" height="4" fill="#a8f8a8"/>
<rect x="652" y="165" width="52" height="1" fill="#0000ff"/>
<rect x="704" y="159" width="67" height="1" fill="#a8f8a8"/>
<rect x="704" y="171" width="67" height="1" fill="#a8f8a8"/>
<rect x="704" y="159" width="1" height="3" fill="#a8f8a8"/>
<rect x="703" y="162" width="1" height="7" fill="#a8f8a8"/>
<rect x="704" y="169" width="1" height="3" fill="#a8f8a8"/>
<rect x="770" y="159" width="1" height="4" fill="#a8f8a8"/>
<rect x="771" y="163" width="1" height="5" fill="#a8f8a8"/>
<rect x="770" y="168" width="1" height="4" fill="#a8f8a8"/>
<rect x="772" y="159" width="68" height="1" fill="#a8f8a8"/>
<rect x="772" y="171" width="68" height="1" fill="#a8f8a8"/>
<rect x="772" y="159" width="1" height="3" fill="#a8f8a8"/>
<rect x="771" y="162" width="1" height="7" fill="#a8f8a8"/>
<rect x="772" y="169" width="1" height="3" fill="#a8f8a8"/>
<rect x="839" y="159" width="1" height="4" fill="#a8f8a8"/>
<rect x="840" y="163" width="1" height="5" fill="#a8f8a8"/>
<rect x="839" y="168" width="1" height="4" fill="#a8f8a8"/>
<rect x="841" y="159" width="67" height="1" fill="#a8f8a8"/>
<rect x="841" y="171" width="67" height="1" fill="#a8f8a8"/>
<rect x="841" y="159" width="1" height="3" fill="#a8f8a8"/>
<rect x="840" y="162" width="1" height="7" fill="#a8f8a8"/>
<rect x="841" y="169" width="1" height="3" fill="#a8f8a8"/>
<rect x="907" y="159" width="1" height="4" fill="#a8f8a8"/>
<rect x="908" y="163" width="1" height="5" fill="#a8f8a8"/>
<rect x="907" y="168" width="1" height="4" fill="#a8f8a8"/>
<rect x="909" y="159" width="67" height="1" fill="#a8f8a8"/>
<rect x="909" y="171" width="67" height="1" fill="#a8f8a8"/>
<rect x="909" y="159" width="1" height="3" fill="#a8f8a8"/>
<rect x="908" y="162" width="1" height="7" fill="#a8f8a8"/>
<rect x="909" y="169" width="1" height="3" fill="#a8f8a8"/>
<rect x="975" y="159" width="1" height="4" fill="#a8f8a8"/>
<rect x="976" y="163" width="1" height="5" fill="#a8f8a8"/>
<rect x="975" y="168" width="1" height="4" fill="#a8f8a8"/>
<rect x="977" y="159" width="16" height="1" fill="#a8f8a8"/>
<rect x="977" y="171" width="16" height="1" fill="#a8f8a8"/>
<rect x="977" y="159" width="1" height="3" fill="#a8f8a8"/>
<rect x="976" y="162" width="1" height="7" fill="#a8f8a8"/>
<rect x="977" y="169" width="1" height="3" fill="#a8f8a8"/>
<rect x="262" y="346" width="731" height="1" fill="#a8f8a8"/>
<rect x="262" y="358" width="731" height="1" fill="#a8f8a8"/>
<rect x="262" y="363" width="202" height="1" fill="#a8f8a8"/>
<rect x="262" y="375" width="202" height="1" fill="#a8f8a8"/>
<rect x="463" y="363" width="1" height="4" fill="#a8f8a8"/>
<rect x="464" y="367" width="1" height="5" fill="#a8f8a8"/>
<rect x="463" y="372" width="1" height="4" fill="#a8f8a8"/>
<rect x="465" y="363" width="272" height="1" fill="#a8f8a8"/>
<rect x="465" y="375" width="272" height="1" fill="#a8f8a8"/>
<rect x="465" y="363" width="1" height="3" fill="#a8f8a8"/>
<rect x="464" y="366" width="1" height="7" fill="#a8f8a8"/>
<rect x="465" y="373" width="1" height="3" fill="#a8f8a8"/>
<rect x="736" y="363" width="1" height="4" fill="#a8f8a8"/>
<rect x="737" y="367" width="1" height="5" fill="#a8f8a8"/>
<rect x="736" y="372" width="1" height="4" fill="#a8f8a8"/>
<rect x="738" y="363" width="67" height="1" fill="#a8f8a8"/>
<rect x="738" y="375" width="67" height="1" fill="#a8f8a8"/>
<rect x="738" y="363" width="1" height="3" fill="#a8f8a8"/>
<rect x="737" y="366" width="1" height="7" fill="#a8f8a8"/>
<rect x="738" y="373" width="1" height="3" fill="#a8f8a8"/>
<rect x="804" y="363" width="1" height="4" fill="#a8f8a8"/>
<rect x="805" y="367" width="1" height="5" fill="#a8f8a8"/>
<rect x="804" y="372" width="1" height="4" fill="#a8f8a8"/>
<rect x="806" y="363" width="68" height="1" fill="#a8f8a8"/>
<rect x="806" y="375" width="68" height="1" fill="#a8f8a8"/>
<rect x="806" y="363" width="1" height="3" fill="#a8f8a8"/>
<rect x="805" y="366" width="1" height="7" fill="#a8f8a8"/>
<rect x="806" y="373" width="1" height="3" fill="#a8f8a8"/>
<rect x="873" y="363" width="1" height="4" fill="#a8f8a8"/>
<rect x="874" y="367" width="1" height="5" fill="#a8f8a8"/>
<rect x="873" y="372" width="1" height="4" fill="#a8f8a8"/>
<rect x="875" y="363" width="67" height="1" fill="#a8f8a8"/>
<rect x="875" y="375" width="67" height="1" fill="#a8f8a8"/>
<rect x="875" y="363" width="1" height="3" fill="#a8f8a8"/>
<rect x="874" y="366" width="1" height="7" fill="#a8f8a8"/>
<rect x="875" y="373" width="1" height="3" fill="#a8f8a8"/>
<rect x="941" y="363" width="1" height="4" fill="#a8f8a8"/>
<rect x="942" y="367" width="1" height="5" fill="#a8f8a8"/>
<rect x="941" y="372" width="1" height="4" fill="#a8f8a8"/>
<rect x="943" y="363" width="50" height="1" fill="#a8f8a8"/>
<rect x="943" y="375" width="50" height="1" fill="#a8f8a8"/>
<rect x="943" y="363" width="1" height="3" fill="#a8f8a8"/>
<rect x="942" y="366" width="1" height="7" fill="#a8f8a8"/>
<rect x="943" y="373" width="1" height="3" fill="#a8f8a8"/>
<rect x="262" y="380" width="475" height="1" fill="#a8f8a8"/>
<rect x="262" y="392" width="475" height="1" fill="#a8f8a8"/>
<rect x="736" y="380" width="1" height="4" fill="#a8f8a8"/>
<rect x="737" y="384" width="1" height="5" fill="#a8f8a8"/>
<rect x="736" y="389" width="1" height="4" fill="#a8f8a8"/>
<rect x="738" y="380" width="136" height="1" fill="#a8f8a8"/>
<rect x="738" y="392" width="136" height="1" fill="#a8f8a8"/>
<rect x="738" y="380" width="1" height="3" fill="#a8f8a8"/>
<rect x="737" y="383" width="1" height="7" fill="#a8f8a8"/>
<rect x="738" y="390" width="1" height="3" fill="#a8f8a8"/>
<rect x="873" y="380" width="1" height="4" fill="#a8f8a8"/>
<rect x="874" y="384" width="1" height="5" fill="#a8f8a8"/>
<rect x="873" y="389" width="1" height="4" fill="#a8f8a8"/>
<rect x="875" y="380" width="118" height="1" fill="#a8f8a8"/>
<rect x="875" y="392" width="118" height="1" fill="#a8f8a8"/>
<rect x="875" y="380" width="1" height="3" fill="#a8f8a8"/>
<rect x="874" y="383" width="1" height="7" fill="#a8f8a8"/>
<rect x="875" y="390" width="1" height="3" fill="#a8f8a8"/>
</svg>
<div class="a" style="left:265px;top:141px;width:27px;height:17px;overflow:hidden;color:#fff;line-height:17px;white-space:nowrap"><div class="t">0002</div></div>
<div class="a" style="left:296px;top:141px;width:99px;height:17px;overflow:hidden;color:#fff;line-height:17px;white-space:nowrap"><div class="t">0007</div></div>
<div class="a" style="left:399px;top:141px;width:30px;height:17px;overflow:hidden;color:#fff;line-height:17px;white-space:nowrap"><div class="t">0008</div></div>
<div class="a" style="left:433px;top:141px;width:64px;height:17px;overflow:hidden;color:#fff;line-height:17px;white-space:nowrap"><div class="t">8001</div></div>
<div class="a" style="left:501px;top:141px;width:64px;height:17px;overflow:hidden;color:#fff;line-height:17px;white-space:nowrap"><div class="t">8001</div></div>
<div class="a" style="left:569px;top:141px;width:99px;height:17px;overflow:hidden;color:#fff;line-height:17px;white-space:nowrap"><div class="t">0008</div></div>
<div class="a" style="left:672px;top:141px;width:30px;height:17px;overflow:hidden;color:#fff;line-height:17px;white-space:nowrap"><div class="t">8001</div></div>
<div class="a" style="left:706px;top:141px;width:287px;height:17px;overflow:hidden;color:#fff;line-height:17px;white-space:nowrap"><div class="t">8001</div></div>
<div class="a" style="left:313px;top:158px;width:64px;height:17px;overflow:hidden;color:#fff;line-height:17px;white-space:nowrap"><div class="t">01</div></div>
<div class="a" style="left:433px;top:158px;width:64px;height:17px;overflow:hidden;color:#fff;line-height:17px;white-space:nowrap"><div class="t">a8</div></div>
<div class="a" style="left:586px;top:158px;width:65px;height:17px;overflow:hidden;color:#fff;line-height:17px;white-space:nowrap"><div class="t">80</div></div>
<div class="a" style="left:706px;top:158px;width:64px;height:17px;overflow:hidden;color:#fff;line-height:17px;white-space:nowrap"><div class="t">a8</div></div>
<div class="a" style="left:774px;top:158px;width:65px;height:17px;overflow:hidden;color:#fff;line-height:17px;white-space:nowrap"><div class="t">aa</div></div>
<div class="a" style="left:843px;top:158px;width:64px;height:17px;overflow:hidden;color:#fff;line-height:17px;white-space:nowrap"><div class="t">aa</div></div>
<div class="a" style="left:911px;top:158px;width:64px;height:17px;overflow:hidden;color:#fff;line-height:17px;white-space:nowrap"><div class="t">ac</div></div>
<div class="a" style="left:979px;top:158px;width:14px;height:17px;overflow:hidden;color:#fff;line-height:17px;white-space:nowrap"><div class="t">ac</div></div>
<div class="a" style="left:265px;top:345px;width:728px;height:17px;overflow:hidden;color:#fff;line-height:17px;white-space:nowrap"><div class="t">008001</div></div>
<div class="a" style="left:265px;top:362px;width:198px;height:17px;overflow:hidden;color:#fff;line-height:17px;white-space:nowrap"><div class="t">a8</div></div>
<div class="a" style="left:467px;top:362px;width:269px;height:17px;overflow:hidden;color:#fff;line-height:17px;white-space:nowrap"><div class="t">a9</div></div>
<div class="a" style="left:740px;top:362px;width:64px;height:17px;overflow:hidden;color:#fff;line-height:17px;white-space:nowrap"><div class="t">aa</div></div>
<div class="a" style="left:808px;top:362px;width:65px;height:17px;overflow:hidden;color:#fff;line-height:17px;white-space:nowrap"><div class="t">ab</div></div>
<div class="a" style="left:877px;top:362px;width:64px;height:17px;overflow:hidden;color:#fff;line-height:17px;white-space:nowrap"><div class="t">ac</div></div>
<div class="a" style="left:945px;top:362px;width:48px;height:17px;overflow:hidden;color:#fff;line-height:17px;white-space:nowrap"><div class="t">ad</div></div>
<div class="a" style="left:265px;top:379px;width:471px;height:17px;overflow:hidden;color:#fff;line-height:17px;white-space:nowrap"><div class="t">55</div></div>
<div class="a" style="left:740px;top:379px;width:133px;height:17px;overflow:hidden;color:#fff;line-height:17px;white-space:nowrap"><div class="t">a8</div></div>
<div class="a" style="left:877px;top:379px;width:116px;height:17px;overflow:hidden;color:#fff;line-height:17px;white-space:nowrap"><div class="t">aa</div></div>
<div class="dia" style="top:5px"><svg width="15" height="15" viewBox="0 0 15 15" shape-rendering="crispEdges"><polygon points="7.5,0 15,7.5 7.5,15 0,7.5" fill="#1890d8"/><polygon points="7.5,0 15,7.5 11,7.5 7.5,4" fill="#1c9ce0"/><polygon points="7.5,0 7.5,4 4,7.5 0,7.5" fill="#b8ecfc"/><polygon points="15,7.5 7.5,15 7.5,11 11,7.5" fill="#0a6ea4"/><polygon points="7.5,4 11,7.5 7.5,11 4,7.5" fill="#0cc4f4"/></svg></div>
<div class="nm" style="top:4px">/tb_dma1/rst_n</div>
<div class="vl" style="top:4px">1</div>
<div class="dia" style="top:22px"><svg width="15" height="15" viewBox="0 0 15 15" shape-rendering="crispEdges"><polygon points="7.5,0 15,7.5 7.5,15 0,7.5" fill="#1890d8"/><polygon points="7.5,0 15,7.5 11,7.5 7.5,4" fill="#1c9ce0"/><polygon points="7.5,0 7.5,4 4,7.5 0,7.5" fill="#b8ecfc"/><polygon points="15,7.5 7.5,15 7.5,11 11,7.5" fill="#0a6ea4"/><polygon points="7.5,4 11,7.5 7.5,11 4,7.5" fill="#0cc4f4"/></svg></div>
<div class="nm" style="top:21px">/tb_dma1/clk</div>
<div class="vl" style="top:21px">0</div>
<div class="dia" style="top:39px"><svg width="15" height="15" viewBox="0 0 15 15" shape-rendering="crispEdges"><polygon points="7.5,0 15,7.5 7.5,15 0,7.5" fill="#1890d8"/><polygon points="7.5,0 15,7.5 11,7.5 7.5,4" fill="#1c9ce0"/><polygon points="7.5,0 7.5,4 4,7.5 0,7.5" fill="#b8ecfc"/><polygon points="15,7.5 7.5,15 7.5,11 11,7.5" fill="#0a6ea4"/><polygon points="7.5,4 11,7.5 7.5,11 4,7.5" fill="#0cc4f4"/></svg></div>
<div class="nm" style="top:38px">/tb_dma1/iorq_n</div>
<div class="vl" style="top:38px">St1</div>
<div class="dia" style="top:56px"><svg width="15" height="15" viewBox="0 0 15 15" shape-rendering="crispEdges"><polygon points="7.5,0 15,7.5 7.5,15 0,7.5" fill="#1890d8"/><polygon points="7.5,0 15,7.5 11,7.5 7.5,4" fill="#1c9ce0"/><polygon points="7.5,0 7.5,4 4,7.5 0,7.5" fill="#b8ecfc"/><polygon points="15,7.5 7.5,15 7.5,11 11,7.5" fill="#0a6ea4"/><polygon points="7.5,4 11,7.5 7.5,11 4,7.5" fill="#0cc4f4"/></svg></div>
<div class="nm" style="top:55px">/tb_dma1/mreq_n</div>
<div class="vl" style="top:55px">St0</div>
<div class="dia" style="top:73px"><svg width="15" height="15" viewBox="0 0 15 15" shape-rendering="crispEdges"><polygon points="7.5,0 15,7.5 7.5,15 0,7.5" fill="#1890d8"/><polygon points="7.5,0 15,7.5 11,7.5 7.5,4" fill="#1c9ce0"/><polygon points="7.5,0 7.5,4 4,7.5 0,7.5" fill="#b8ecfc"/><polygon points="15,7.5 7.5,15 7.5,11 11,7.5" fill="#0a6ea4"/><polygon points="7.5,4 11,7.5 7.5,11 4,7.5" fill="#0cc4f4"/></svg></div>
<div class="nm" style="top:72px">/tb_dma1/rd_n</div>
<div class="vl" style="top:72px">St0</div>
<div class="dia" style="top:90px"><svg width="15" height="15" viewBox="0 0 15 15" shape-rendering="crispEdges"><polygon points="7.5,0 15,7.5 7.5,15 0,7.5" fill="#1890d8"/><polygon points="7.5,0 15,7.5 11,7.5 7.5,4" fill="#1c9ce0"/><polygon points="7.5,0 7.5,4 4,7.5 0,7.5" fill="#b8ecfc"/><polygon points="15,7.5 7.5,15 7.5,11 11,7.5" fill="#0a6ea4"/><polygon points="7.5,4 11,7.5 7.5,11 4,7.5" fill="#0cc4f4"/></svg></div>
<div class="nm" style="top:89px">/tb_dma1/wr_n</div>
<div class="vl" style="top:89px">St1</div>
<div class="dia" style="top:107px"><svg width="15" height="15" viewBox="0 0 15 15" shape-rendering="crispEdges"><polygon points="7.5,0 15,7.5 7.5,15 0,7.5" fill="#1890d8"/><polygon points="7.5,0 15,7.5 11,7.5 7.5,4" fill="#1c9ce0"/><polygon points="7.5,0 7.5,4 4,7.5 0,7.5" fill="#b8ecfc"/><polygon points="15,7.5 7.5,15 7.5,11 11,7.5" fill="#0a6ea4"/><polygon points="7.5,4 11,7.5 7.5,11 4,7.5" fill="#0cc4f4"/></svg></div>
<div class="nm" style="top:106px">/tb_dma1/busrq_n</div>
<div class="vl" style="top:106px">St1</div>
<div class="dia" style="top:124px"><svg width="15" height="15" viewBox="0 0 15 15" shape-rendering="crispEdges"><polygon points="7.5,0 15,7.5 7.5,15 0,7.5" fill="#1890d8"/><polygon points="7.5,0 15,7.5 11,7.5 7.5,4" fill="#1c9ce0"/><polygon points="7.5,0 7.5,4 4,7.5 0,7.5" fill="#b8ecfc"/><polygon points="15,7.5 7.5,15 7.5,11 11,7.5" fill="#0a6ea4"/><polygon points="7.5,4 11,7.5 7.5,11 4,7.5" fill="#0cc4f4"/></svg></div>
<div class="nm" style="top:123px">/tb_dma1/busak_n</div>
<div class="vl" style="top:123px">St1</div>
<div class="dia" style="top:141px"><svg width="15" height="15" viewBox="0 0 15 15" shape-rendering="crispEdges"><polygon points="7.5,0 15,7.5 7.5,15 0,7.5" fill="#1890d8"/><polygon points="7.5,0 15,7.5 11,7.5 7.5,4" fill="#1c9ce0"/><polygon points="7.5,0 7.5,4 4,7.5 0,7.5" fill="#b8ecfc"/><polygon points="15,7.5 7.5,15 7.5,11 11,7.5" fill="#0a6ea4"/><polygon points="7.5,4 11,7.5 7.5,11 4,7.5" fill="#0cc4f4"/></svg></div>
<div class="plus" style="top:144px;background:linear-gradient(#ffffff,#f0f0fa 50%,#c8cce8);border-radius:1px;box-shadow:0 1px 0 #8890b0;"><div class="a" style="left:3px;top:5px;width:5px;height:1px;background:#000"></div><div class="a" style="left:5px;top:3px;width:1px;height:5px;background:#000"></div></div>
<div class="a" style="left:19px;top:149px;width:3px;height:1px;background:#d8d8d8;"></div>
<div class="nm" style="top:140px">/tb_dma1/zaddr</div>
<div class="vl" style="top:140px">0001</div>
<div class="dia" style="top:158px"><svg width="15" height="15" viewBox="0 0 15 15" shape-rendering="crispEdges"><polygon points="7.5,0 15,7.5 7.5,15 0,7.5" fill="#1890d8"/><polygon points="7.5,0 15,7.5 11,7.5 7.5,4" fill="#1c9ce0"/><polygon points="7.5,0 7.5,4 4,7.5 0,7.5" fill="#b8ecfc"/><polygon points="15,7.5 7.5,15 7.5,11 11,7.5" fill="#0a6ea4"/><polygon points="7.5,4 11,7.5 7.5,11 4,7.5" fill="#0cc4f4"/></svg></div>
<div class="plus" style="top:161px;background:linear-gradient(#ffffff,#f0f0fa 50%,#c8cce8);border-radius:1px;box-shadow:0 1px 0 #8890b0;"><div class="a" style="left:3px;top:5px;width:5px;height:1px;background:#000"></div><div class="a" style="left:5px;top:3px;width:1px;height:5px;background:#000"></div></div>
<div class="a" style="left:19px;top:166px;width:3px;height:1px;background:#d8d8d8;"></div>
<div class="nm" style="top:157px">/tb_dma1/zdata</div>
<div class="vl" style="top:157px">55</div>
<div class="dia" style="top:175px"><svg width="15" height="15" viewBox="0 0 15 15" shape-rendering="crispEdges"><polygon points="7.5,0 15,7.5 7.5,15 0,7.5" fill="#1890d8"/><polygon points="7.5,0 15,7.5 11,7.5 7.5,4" fill="#1c9ce0"/><polygon points="7.5,0 7.5,4 4,7.5 0,7.5" fill="#b8ecfc"/><polygon points="15,7.5 7.5,15 7.5,11 11,7.5" fill="#0a6ea4"/><polygon points="7.5,4 11,7.5 7.5,11 4,7.5" fill="#0cc4f4"/></svg></div>
<div class="nm" style="top:174px">/tb_dma1/myram/ce_n</div>
<div class="vl" style="top:174px">St1</div>
<div class="dia" style="top:192px"><svg width="15" height="15" viewBox="0 0 15 15" shape-rendering="crispEdges"><polygon points="7.5,0 15,7.5 7.5,15 0,7.5" fill="#1890d8"/><polygon points="7.5,0 15,7.5 11,7.5 7.5,4" fill="#1c9ce0"/><polygon points="7.5,0 7.5,4 4,7.5 0,7.5" fill="#b8ecfc"/><polygon points="15,7.5 7.5,15 7.5,11 11,7.5" fill="#0a6ea4"/><polygon points="7.5,4 11,7.5 7.5,11 4,7.5" fill="#0cc4f4"/></svg></div>
<div class="nm" style="top:191px">/tb_dma1/myram/oe_n</div>
<div class="vl" style="top:191px">St0</div>
<div class="dia" style="top:209px"><svg width="15" height="15" viewBox="0 0 15 15" shape-rendering="crispEdges"><polygon points="7.5,0 15,7.5 7.5,15 0,7.5" fill="#1890d8"/><polygon points="7.5,0 15,7.5 11,7.5 7.5,4" fill="#1c9ce0"/><polygon points="7.5,0 7.5,4 4,7.5 0,7.5" fill="#b8ecfc"/><polygon points="15,7.5 7.5,15 7.5,11 11,7.5" fill="#0a6ea4"/><polygon points="7.5,4 11,7.5 7.5,11 4,7.5" fill="#0cc4f4"/></svg></div>
<div class="nm" style="top:208px">/tb_dma1/myram/we_n</div>
<div class="vl" style="top:208px">St1</div>
<div class="dia" style="top:243px"><svg width="15" height="15" viewBox="0 0 15 15" shape-rendering="crispEdges"><polygon points="7.5,0 15,7.5 7.5,15 0,7.5" fill="#1890d8"/><polygon points="7.5,0 15,7.5 11,7.5 7.5,4" fill="#1c9ce0"/><polygon points="7.5,0 7.5,4 4,7.5 0,7.5" fill="#b8ecfc"/><polygon points="15,7.5 7.5,15 7.5,11 11,7.5" fill="#0a6ea4"/><polygon points="7.5,4 11,7.5 7.5,11 4,7.5" fill="#0cc4f4"/></svg></div>
<div class="nm" style="top:242px">/tb_dma1/mydma/dma_req</div>
<div class="vl" style="top:242px">St0</div>
<div class="dia" style="top:260px"><svg width="15" height="15" viewBox="0 0 15 15" shape-rendering="crispEdges"><polygon points="7.5,0 15,7.5 7.5,15 0,7.5" fill="#1890d8"/><polygon points="7.5,0 15,7.5 11,7.5 7.5,4" fill="#1c9ce0"/><polygon points="7.5,0 7.5,4 4,7.5 0,7.5" fill="#b8ecfc"/><polygon points="15,7.5 7.5,15 7.5,11 11,7.5" fill="#0a6ea4"/><polygon points="7.5,4 11,7.5 7.5,11 4,7.5" fill="#0cc4f4"/></svg></div>
<div class="nm" style="top:259px">/tb_dma1/mydma/dma_rnw</div>
<div class="vl" style="top:259px">St1</div>
<div class="dia" style="top:277px"><svg width="15" height="15" viewBox="0 0 15 15" shape-rendering="crispEdges"><polygon points="7.5,0 15,7.5 7.5,15 0,7.5" fill="#1890d8"/><polygon points="7.5,0 15,7.5 11,7.5 7.5,4" fill="#1c9ce0"/><polygon points="7.5,0 7.5,4 4,7.5 0,7.5" fill="#b8ecfc"/><polygon points="15,7.5 7.5,15 7.5,11 11,7.5" fill="#0a6ea4"/><polygon points="7.5,4 11,7.5 7.5,11 4,7.5" fill="#0cc4f4"/></svg></div>
<div class="nm" style="top:276px">/tb_dma1/mydma/dma_busynready</div>
<div class="vl" style="top:276px">0</div>
<div class="dia" style="top:294px"><svg width="15" height="15" viewBox="0 0 15 15" shape-rendering="crispEdges"><polygon points="7.5,0 15,7.5 7.5,15 0,7.5" fill="#1890d8"/><polygon points="7.5,0 15,7.5 11,7.5 7.5,4" fill="#1c9ce0"/><polygon points="7.5,0 7.5,4 4,7.5 0,7.5" fill="#b8ecfc"/><polygon points="15,7.5 7.5,15 7.5,11 11,7.5" fill="#0a6ea4"/><polygon points="7.5,4 11,7.5 7.5,11 4,7.5" fill="#0cc4f4"/></svg></div>
<div class="nm" style="top:293px">/tb_dma1/mydma/dma_ack</div>
<div class="vl" style="top:293px">0</div>
<div class="dia" style="top:311px"><svg width="15" height="15" viewBox="0 0 15 15" shape-rendering="crispEdges"><polygon points="7.5,0 15,7.5 7.5,15 0,7.5" fill="#1890d8"/><polygon points="7.5,0 15,7.5 11,7.5 7.5,4" fill="#1c9ce0"/><polygon points="7.5,0 7.5,4 4,7.5 0,7.5" fill="#b8ecfc"/><polygon points="15,7.5 7.5,15 7.5,11 11,7.5" fill="#0a6ea4"/><polygon points="7.5,4 11,7.5 7.5,11 4,7.5" fill="#0cc4f4"/></svg></div>
<div class="nm" style="top:310px">/tb_dma1/mydma/dma_end</div>
<div class="vl" style="top:310px">0</div>
<div class="dia" style="top:328px"><svg width="15" height="15" viewBox="0 0 15 15" shape-rendering="crispEdges"><polygon points="7.5,0 15,7.5 7.5,15 0,7.5" fill="#1890d8"/><polygon points="7.5,0 15,7.5 11,7.5 7.5,4" fill="#1c9ce0"/><polygon points="7.5,0 7.5,4 4,7.5 0,7.5" fill="#b8ecfc"/><polygon points="15,7.5 7.5,15 7.5,11 11,7.5" fill="#0a6ea4"/><polygon points="7.5,4 11,7.5 7.5,11 4,7.5" fill="#0cc4f4"/></svg></div>
<div class="nm" style="top:327px">/tb_dma1/mydma/mem_dma_bus</div>
<div class="vl" style="top:327px">St0</div>
<div class="dia" style="top:345px"><svg width="15" height="15" viewBox="0 0 15 15" shape-rendering="crispEdges"><polygon points="7.5,0 15,7.5 7.5,15 0,7.5" fill="#1890d8"/><polygon points="7.5,0 15,7.5 11,7.5 7.5,4" fill="#1c9ce0"/><polygon points="7.5,0 7.5,4 4,7.5 0,7.5" fill="#b8ecfc"/><polygon points="15,7.5 7.5,15 7.5,11 11,7.5" fill="#0a6ea4"/><polygon points="7.5,4 11,7.5 7.5,11 4,7.5" fill="#0cc4f4"/></svg></div>
<div class="plus" style="top:348px;background:linear-gradient(#ffffff,#f0f0fa 50%,#c8cce8);border-radius:1px;box-shadow:0 1px 0 #8890b0;"><div class="a" style="left:3px;top:5px;width:5px;height:1px;background:#000"></div><div class="a" style="left:5px;top:3px;width:1px;height:5px;background:#000"></div></div>
<div class="a" style="left:19px;top:353px;width:3px;height:1px;background:#d8d8d8;"></div>
<div class="nm" style="top:344px">/tb_dma1/mydma/dma_addr</div>
<div class="vl" style="top:344px">008001</div>
<div class="dia" style="top:362px"><svg width="15" height="15" viewBox="0 0 15 15" shape-rendering="crispEdges"><polygon points="7.5,0 15,7.5 7.5,15 0,7.5" fill="#1890d8"/><polygon points="7.5,0 15,7.5 11,7.5 7.5,4" fill="#1c9ce0"/><polygon points="7.5,0 7.5,4 4,7.5 0,7.5" fill="#b8ecfc"/><polygon points="15,7.5 7.5,15 7.5,11 11,7.5" fill="#0a6ea4"/><polygon points="7.5,4 11,7.5 7.5,11 4,7.5" fill="#0cc4f4"/></svg></div>
<div class="plus" style="top:365px;background:linear-gradient(#ffffff,#f0f0fa 50%,#c8cce8);border-radius:1px;box-shadow:0 1px 0 #8890b0;"><div class="a" style="left:3px;top:5px;width:5px;height:1px;background:#000"></div><div class="a" style="left:5px;top:3px;width:1px;height:5px;background:#000"></div></div>
<div class="a" style="left:19px;top:370px;width:3px;height:1px;background:#d8d8d8;"></div>
<div class="nm" style="top:361px">/tb_dma1/mydma/dma_wd</div>
<div class="vl" style="top:361px">a5</div>
<div class="dia" style="top:379px"><svg width="15" height="15" viewBox="0 0 15 15" shape-rendering="crispEdges"><polygon points="7.5,0 15,7.5 7.5,15 0,7.5" fill="#1890d8"/><polygon points="7.5,0 15,7.5 11,7.5 7.5,4" fill="#1c9ce0"/><polygon points="7.5,0 7.5,4 4,7.5 0,7.5" fill="#b8ecfc"/><polygon points="15,7.5 7.5,15 7.5,11 11,7.5" fill="#0a6ea4"/><polygon points="7.5,4 11,7.5 7.5,11 4,7.5" fill="#0cc4f4"/></svg></div>
<div class="plus" style="top:382px;background:linear-gradient(#ffffff,#f0f0fa 50%,#c8cce8);border-radius:1px;box-shadow:0 1px 0 #8890b0;"><div class="a" style="left:3px;top:5px;width:5px;height:1px;background:#000"></div><div class="a" style="left:5px;top:3px;width:1px;height:5px;background:#000"></div></div>
<div class="a" style="left:19px;top:387px;width:3px;height:1px;background:#d8d8d8;"></div>
<div class="nm" style="top:378px">/tb_dma1/mydma/dma_rd</div>
<div class="vl" style="top:378px">xx</div>
<div class="a" style="left:5px;top:576px;width:202px;height:19px;line-height:19px;text-align:right;color:#fff;white-space:nowrap"><div class="tr">Now</div></div>
<div class="a" style="left:5px;top:598px;width:201px;height:17px;line-height:17px;text-align:right;color:#000;white-space:nowrap"><div class="tr" style="transform:scaleX(0.85)">Cursor 1</div></div>
<div class="a" style="left:221px;top:576px;width:29px;height:19px;line-height:19px;overflow:hidden;color:#fff;white-space:nowrap"><div class="tr" style="position:absolute;right:0;top:0">5600 ns</div></div>
<div class="a" style="left:221px;top:598px;width:29px;height:17px;line-height:17px;overflow:hidden;color:#000;white-space:nowrap"><div class="tr" style="position:absolute;right:0;top:0">4731 ns</div></div>
<svg class="a" style="left:0;top:0" width="999" height="616" shape-rendering="crispEdges">
<rect x="264" y="578" width="1" height="4" fill="#00ff00"/>
<rect x="269" y="578" width="1" height="4" fill="#00ff00"/>
<rect x="273" y="578" width="1" height="4" fill="#00ff00"/>
<rect x="277" y="578" width="1" height="4" fill="#00ff00"/>
<rect x="282" y="578" width="1" height="4" fill="#00ff00"/>
<rect x="286" y="578" width="1" height="4" fill="#00ff00"/>
<rect x="290" y="578" width="1" height="4" fill="#00ff00"/>
<rect x="294" y="578" width="1" height="4" fill="#00ff00"/>
<rect x="299" y="578" width="1" height="4" fill="#00ff00"/>
<rect x="303" y="578" width="1" height="4" fill="#00ff00"/>
<rect x="307" y="578" width="1" height="4" fill="#00ff00"/>
<rect x="310" y="575" width="1" height="7" fill="#00ff00"/>
<rect x="315" y="578" width="1" height="4" fill="#00ff00"/>
<rect x="320" y="578" width="1" height="4" fill="#00ff00"/>
<rect x="324" y="578" width="1" height="4" fill="#00ff00"/>
<rect x="328" y="578" width="1" height="4" fill="#00ff00"/>
<rect x="332" y="578" width="1" height="4" fill="#00ff00"/>
<rect x="337" y="578" width="1" height="4" fill="#00ff00"/>
<rect x="341" y="578" width="1" height="4" fill="#00ff00"/>
<rect x="345" y="578" width="1" height="4" fill="#00ff00"/>
<rect x="350" y="578" width="1" height="4" fill="#00ff00"/>
<rect x="354" y="578" width="1" height="4" fill="#00ff00"/>
<rect x="358" y="578" width="1" height="4" fill="#00ff00"/>
<rect x="362" y="578" width="1" height="4" fill="#00ff00"/>
<rect x="367" y="578" width="1" height="4" fill="#00ff00"/>
<rect x="371" y="578" width="1" height="4" fill="#00ff00"/>
<rect x="375" y="578" width="1" height="4" fill="#00ff00"/>
<rect x="379" y="578" width="1" height="4" fill="#00ff00"/>
<rect x="384" y="578" width="1" height="4" fill="#00ff00"/>
<rect x="388" y="578" width="1" height="4" fill="#00ff00"/>
<rect x="392" y="578" width="1" height="4" fill="#00ff00"/>
<rect x="396" y="575" width="1" height="7" fill="#00ff00"/>
<rect x="401" y="578" width="1" height="4" fill="#00ff00"/>
<rect x="405" y="578" width="1" height="4" fill="#00ff00"/>
<rect x="409" y="578" width="1" height="4" fill="#00ff00"/>
<rect x="413" y="578" width="1" height="4" fill="#00ff00"/>
<rect x="418" y="578" width="1" height="4" fill="#00ff00"/>
<rect x="422" y="578" width="1" height="4" fill="#00ff00"/>
<rect x="426" y="578" width="1" height="4" fill="#00ff00"/>
<rect x="431" y="578" width="1" height="4" fill="#00ff00"/>
<rect x="435" y="578" width="1" height="4" fill="#00ff00"/>
<rect x="439" y="578" width="1" height="4" fill="#00ff00"/>
<rect x="443" y="578" width="1" height="4" fill="#00ff00"/>
<rect x="448" y="578" width="1" height="4" fill="#00ff00"/>
<rect x="452" y="578" width="1" height="4" fill="#00ff00"/>
<rect x="456" y="578" width="1" height="4" fill="#00ff00"/>
<rect x="460" y="578" width="1" height="4" fill="#00ff00"/>
<rect x="464" y="578" width="1" height="4" fill="#00ff00"/>
<rect x="469" y="578" width="1" height="4" fill="#00ff00"/>
<rect x="473" y="578" width="1" height="4" fill="#00ff00"/>
<rect x="477" y="578" width="1" height="4" fill="#00ff00"/>
<rect x="481" y="575" width="1" height="7" fill="#00ff00"/>
<rect x="485" y="578" width="1" height="4" fill="#00ff00"/>
<rect x="490" y="578" width="1" height="4" fill="#00ff00"/>
<rect x="494" y="578" width="1" height="4" fill="#00ff00"/>
<rect x="498" y="578" width="1" height="4" fill="#00ff00"/>
<rect x="502" y="578" width="1" height="4" fill="#00ff00"/>
<rect x="507" y="578" width="1" height="4" fill="#00ff00"/>
<rect x="512" y="578" width="1" height="4" fill="#00ff00"/>
<rect x="516" y="578" width="1" height="4" fill="#00ff00"/>
<rect x="520" y="578" width="1" height="4" fill="#00ff00"/>
<rect x="524" y="578" width="1" height="4" fill="#00ff00"/>
<rect x="529" y="578" width="1" height="4" fill="#00ff00"/>
<rect x="533" y="578" width="1" height="4" fill="#00ff00"/>
<rect x="537" y="578" width="1" height="4" fill="#00ff00"/>
<rect x="541" y="578" width="1" height="4" fill="#00ff00"/>
<rect x="546" y="578" width="1" height="4" fill="#00ff00"/>
<rect x="550" y="578" width="1" height="4" fill="#00ff00"/>
<rect x="554" y="578" width="1" height="4" fill="#00ff00"/>
<rect x="558" y="578" width="1" height="4" fill="#00ff00"/>
<rect x="563" y="578" width="1" height="4" fill="#00ff00"/>
<rect x="567" y="575" width="1" height="7" fill="#00ff00"/>
<rect x="571" y="578" width="1" height="4" fill="#00ff00"/>
<rect x="575" y="578" width="1" height="4" fill="#00ff00"/>
<rect x="580" y="578" width="1" height="4" fill="#00ff00"/>
<rect x="584" y="578" width="1" height="4" fill="#00ff00"/>
<rect x="588" y="578" width="1" height="4" fill="#00ff00"/>
<rect x="593" y="578" width="1" height="4" fill="#00ff00"/>
<rect x="597" y="578" width="1" height="4" fill="#00ff00"/>
<rect x="601" y="578" width="1" height="4" fill="#00ff00"/>
<rect x="605" y="578" width="1" height="4" fill="#00ff00"/>
<rect x="610" y="578" width="1" height="4" fill="#00ff00"/>
<rect x="614" y="578" width="1" height="4" fill="#00ff00"/>
<rect x="618" y="578" width="1" height="4" fill="#00ff00"/>
<rect x="622" y="578" width="1" height="4" fill="#00ff00"/>
<rect x="627" y="578" width="1" height="4" fill="#00ff00"/>
<rect x="630" y="578" width="1" height="4" fill="#00ff00"/>
<rect x="634" y="578" width="1" height="4" fill="#00ff00"/>
<rect x="639" y="578" width="1" height="4" fill="#00ff00"/>
<rect x="643" y="578" width="1" height="4" fill="#00ff00"/>
<rect x="647" y="578" width="1" height="4" fill="#00ff00"/>
<rect x="652" y="575" width="1" height="7" fill="#00ff00"/>
<rect x="656" y="578" width="1" height="4" fill="#00ff00"/>
<rect x="661" y="578" width="1" height="4" fill="#00ff00"/>
<rect x="665" y="578" width="1" height="4" fill="#00ff00"/>
<rect x="669" y="578" width="1" height="4" fill="#00ff00"/>
<rect x="673" y="578" width="1" height="4" fill="#00ff00"/>
<rect x="678" y="578" width="1" height="4" fill="#00ff00"/>
<rect x="682" y="578" width="1" height="4" fill="#00ff00"/>
<rect x="686" y="578" width="1" height="4" fill="#00ff00"/>
<rect x="691" y="578" width="1" height="4" fill="#00ff00"/>
<rect x="695" y="578" width="1" height="4" fill="#00ff00"/>
<rect x="699" y="578" width="1" height="4" fill="#00ff00"/>
<rect x="703" y="578" width="1" height="4" fill="#00ff00"/>
<rect x="708" y="578" width="1" height="4" fill="#00ff00"/>
<rect x="712" y="578" width="1" height="4" fill="#00ff00"/>
<rect x="716" y="578" width="1" height="4" fill="#00ff00"/>
<rect x="720" y="578" width="1" height="4" fill="#00ff00"/>
<rect x="725" y="578" width="1" height="4" fill="#00ff00"/>
<rect x="729" y="578" width="1" height="4" fill="#00ff00"/>
<rect x="733" y="578" width="1" height="4" fill="#00ff00"/>
<rect x="737" y="575" width="1" height="7" fill="#00ff00"/>
<rect x="742" y="578" width="1" height="4" fill="#00ff00"/>
<rect x="746" y="578" width="1" height="4" fill="#00ff00"/>
<rect x="750" y="578" width="1" height="4" fill="#00ff00"/>
<rect x="755" y="578" width="1" height="4" fill="#00ff00"/>
<rect x="759" y="578" width="1" height="4" fill="#00ff00"/>
<rect x="763" y="578" width="1" height="4" fill="#00ff00"/>
<rect x="767" y="578" width="1" height="4" fill="#00ff00"/>
<rect x="772" y="578" width="1" height="4" fill="#00ff00"/>
<rect x="776" y="578" width="1" height="4" fill="#00ff00"/>
<rect x="780" y="578" width="1" height="4" fill="#00ff00"/>
<rect x="784" y="578" width="1" height="4" fill="#00ff00"/>
<rect x="789" y="578" width="1" height="4" fill="#00ff00"/>
<rect x="793" y="578" width="1" height="4" fill="#00ff00"/>
<rect x="797" y="578" width="1" height="4" fill="#00ff00"/>
<rect x="801" y="578" width="1" height="4" fill="#00ff00"/>
<rect x="805" y="578" width="1" height="4" fill="#00ff00"/>
<rect x="810" y="578" width="1" height="4" fill="#00ff00"/>
<rect x="814" y="578" width="1" height="4" fill="#00ff00"/>
<rect x="818" y="578" width="1" height="4" fill="#00ff00"/>
<rect x="823" y="575" width="1" height="7" fill="#00ff00"/>
<rect x="827" y="578" width="1" height="4" fill="#00ff00"/>
<rect x="832" y="578" width="1" height="4" fill="#00ff00"/>
<rect x="836" y="578" width="1" height="4" fill="#00ff00"/>
<rect x="840" y="578" width="1" height="4" fill="#00ff00"/>
<rect x="844" y="578" width="1" height="4" fill="#00ff00"/>
<rect x="849" y="578" width="1" height="4" fill="#00ff00"/>
<rect x="853" y="578" width="1" height="4" fill="#00ff00"/>
<rect x="857" y="578" width="1" height="4" fill="#00ff00"/>
<rect x="861" y="578" width="1" height="4" fill="#00ff00"/>
<rect x="865" y="578" width="1" height="4" fill="#00ff00"/>
<rect x="870" y="578" width="1" height="4" fill="#00ff00"/>
<rect x="874" y="578" width="1" height="4" fill="#00ff00"/>
<rect x="878" y="578" width="1" height="4" fill="#00ff00"/>
<rect x="882" y="578" width="1" height="4" fill="#00ff00"/>
<rect x="887" y="578" width="1" height="4" fill="#00ff00"/>
<rect x="891" y="578" width="1" height="4" fill="#00ff00"/>
<rect x="895" y="578" width="1" height="4" fill="#00ff00"/>
<rect x="899" y="578" width="1" height="4" fill="#00ff00"/>
<rect x="904" y="578" width="1" height="4" fill="#00ff00"/>
<rect x="908" y="575" width="1" height="7" fill="#00ff00"/>
<rect x="912" y="578" width="1" height="4" fill="#00ff00"/>
<rect x="917" y="578" width="1" height="4" fill="#00ff00"/>
<rect x="921" y="578" width="1" height="4" fill="#00ff00"/>
<rect x="925" y="578" width="1" height="4" fill="#00ff00"/>
<rect x="929" y="578" width="1" height="4" fill="#00ff00"/>
<rect x="934" y="578" width="1" height="4" fill="#00ff00"/>
<rect x="938" y="578" width="1" height="4" fill="#00ff00"/>
<rect x="942" y="578" width="1" height="4" fill="#00ff00"/>
<rect x="946" y="578" width="1" height="4" fill="#00ff00"/>
<rect x="951" y="578" width="1" height="4" fill="#00ff00"/>
<rect x="955" y="578" width="1" height="4" fill="#00ff00"/>
<rect x="959" y="578" width="1" height="4" fill="#00ff00"/>
<rect x="964" y="578" width="1" height="4" fill="#00ff00"/>
<rect x="968" y="578" width="1" height="4" fill="#00ff00"/>
<rect x="972" y="578" width="1" height="4" fill="#00ff00"/>
<rect x="976" y="578" width="1" height="4" fill="#00ff00"/>
<rect x="981" y="578" width="1" height="4" fill="#00ff00"/>
<rect x="985" y="578" width="1" height="4" fill="#00ff00"/>
<rect x="989" y="578" width="1" height="4" fill="#00ff00"/>
<rect x="993" y="575" width="1" height="7" fill="#00ff00"/>
</svg>
<div class="a" style="left:262px;top:575px;width:731px;height:22px;overflow:hidden">
<div class="a" style="left:18px;top:9px;width:60px;text-align:center;color:#00ff00;line-height:14px;white-space:nowrap"><div style="transform:scaleX(0.905);will-change:transform">4000</div></div>
<div class="a" style="left:189px;top:9px;width:60px;text-align:center;color:#00ff00;line-height:14px;white-space:nowrap"><div style="transform:scaleX(0.905);will-change:transform">4400</div></div>
<div class="a" style="left:360px;top:9px;width:60px;text-align:center;color:#00ff00;line-height:14px;white-space:nowrap"><div style="transform:scaleX(0.905);will-change:transform">4800</div></div>
<div class="a" style="left:531px;top:9px;width:60px;text-align:center;color:#00ff00;line-height:14px;white-space:nowrap"><div style="transform:scaleX(0.905);will-change:transform">5200</div></div>
<div class="a" style="left:701px;top:9px;width:60px;text-align:center;color:#00ff00;line-height:14px;white-space:nowrap"><div style="transform:scaleX(0.905);will-change:transform">5600</div></div>
</div>
<div class="a" style="left:994px;top:575px;width:1px;height:39px;background:#404040;"></div>
<div class="a" style="left:995px;top:575px;width:1px;height:39px;background:#ece9e0;"></div>
<div class="a" style="left:996px;top:575px;width:2px;height:39px;background:#ffffff;"></div>
<div class="a" style="left:998px;top:575px;width:1px;height:41px;background:#808080;"></div>
</body></html>
